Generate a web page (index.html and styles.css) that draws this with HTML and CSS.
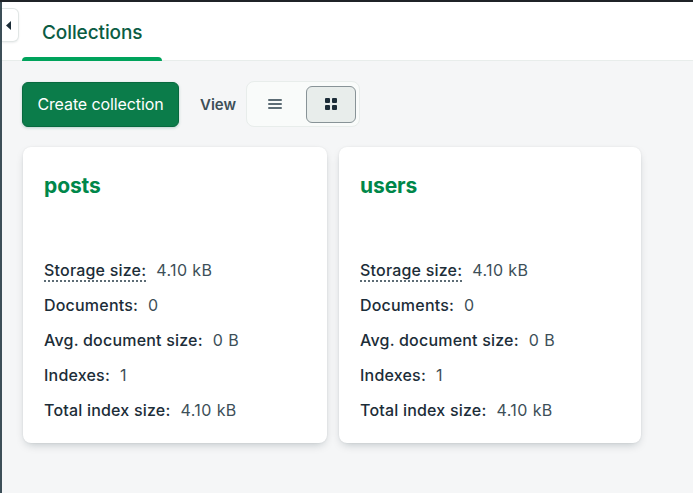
FILE: index.html
```html
<!DOCTYPE html>
<html>
<head>
<meta charset="utf-8">
<link rel="stylesheet" href="styles.css">
</head>
<body>
<div class="topline"></div>
<div class="app">
  <div class="edge"></div>
  <div class="content">
    <button class="collapse" aria-label="Collapse">
      <svg width="6" height="9" viewBox="0 0 6 9"><path d="M5 0 L0 4.5 L5 9 Z" fill="#1c2d38"/></svg>
    </button>
    <header class="header">
      <div class="tab active">Collections</div>
    </header>
    <section class="body">
      <div class="toolbar">
        <button class="btn-primary">Create collection</button>
        <span class="view-label">View</span>
        <div class="segmented">
          <button class="seg">
            <svg width="16" height="14" viewBox="0 0 16 14"><rect x="1" y="2" width="14" height="2" rx="1" fill="#5c6c75"/><rect x="1" y="6" width="14" height="2" rx="1" fill="#5c6c75"/><rect x="1" y="10" width="14" height="2" rx="1" fill="#5c6c75"/></svg>
          </button>
          <button class="seg selected">
            <svg width="14" height="14" viewBox="0 0 14 14"><rect x="1" y="1" width="5" height="5" rx="1" fill="#1c2d38"/><rect x="8" y="1" width="5" height="5" rx="1" fill="#1c2d38"/><rect x="1" y="8" width="5" height="5" rx="1" fill="#1c2d38"/><rect x="8" y="8" width="5" height="5" rx="1" fill="#1c2d38"/></svg>
          </button>
        </div>
      </div>
      <div class="cards">
        <div class="card">
          <h2 class="card-title">posts</h2>
          <dl class="stats">
            <div class="row"><dt><span class="dotted">Storage size:</span></dt><dd>4.10 kB</dd></div>
            <div class="row"><dt>Documents:</dt><dd>0</dd></div>
            <div class="row"><dt>Avg. document size:</dt><dd>0 B</dd></div>
            <div class="row"><dt>Indexes:</dt><dd>1</dd></div>
            <div class="row"><dt>Total index size:</dt><dd>4.10 kB</dd></div>
          </dl>
        </div>
        <div class="card">
          <h2 class="card-title">users</h2>
          <dl class="stats">
            <div class="row"><dt><span class="dotted">Storage size:</span></dt><dd>4.10 kB</dd></div>
            <div class="row"><dt>Documents:</dt><dd>0</dd></div>
            <div class="row"><dt>Avg. document size:</dt><dd>0 B</dd></div>
            <div class="row"><dt>Indexes:</dt><dd>1</dd></div>
            <div class="row"><dt>Total index size:</dt><dd>4.10 kB</dd></div>
          </dl>
        </div>
      </div>
    </section>
  </div>
</div>
</body>
</html>
```
FILE: styles.css
```css
* { box-sizing: border-box; }
html, body { margin: 0; height: 100%; }
body {
  font-family: Inter, "Noto Sans", sans-serif;
  background: #f5f6f7;
  color: #1c2d38;
  overflow: hidden;
}
.topline { height: 2px; background: #1f2327; }
.app { display: flex; height: calc(100% - 2px); }
.edge { width: 2px; background: #3d4f58; flex: none; }
.content { flex: 1; position: relative; background: #f5f6f7; }
.collapse {
  position: absolute; left: 0; top: 6px;
  width: 17px; height: 34px;
  background: #fff; border: 1px solid #e1e6e5; border-left: none;
  border-radius: 0 6px 6px 0;
  display: flex; align-items: center; justify-content: flex-start;
  padding: 0 0 0 4px; margin: 0;
  box-shadow: 0 1px 2px rgba(0,30,43,0.08);
}
.header {
  height: 59px; background: #fff; border-bottom: 1px solid #e8edeb;
  display: flex; align-items: flex-end; padding-left: 20px;
}
.tab {
  position: relative;
  height: 58px; padding: 0 20px;
  display: flex; align-items: center;
  font-size: 19px; font-weight: 500; color: #0b5c43;
  letter-spacing: -0.1px;
  padding-top: 2px;
}
.tab.active::after {
  content: ""; position: absolute; left: 0; right: 0; bottom: -1px;
  height: 4px; background: #00a35c; border-radius: 4px 4px 0 0;
}
.body { padding: 20px 20px; }
.toolbar { display: flex; align-items: center; height: 46px; }
.btn-primary {
  width: 157px; height: 45px;
  background: #0b7c4a; color: #fff;
  border: 1px solid #07693e; border-radius: 6px;
  font-family: inherit; font-size: 16px; font-weight: 400;
  letter-spacing: -0.1px;
  box-shadow: 0 1px 3px rgba(0,104,74,0.25);
  padding: 0;
}
.view-label { margin-left: 21px; font-size: 15px; font-weight: 600; color: #3d4f58; }
.segmented {
  margin-left: 10px;
  width: 114px; height: 46px;
  background: #f9fbfa; border: 1px solid #e8edeb; border-radius: 8px;
  display: flex; align-items: center; gap: 6px; padding: 0 3px 0 3px;
}
.seg {
  width: 51px; height: 37px; border-radius: 6px;
  background: transparent; border: 1px solid transparent;
  display: flex; align-items: center; justify-content: center; padding: 0;
}
.seg.selected { background: #e8edeb; border-color: #889397; }
.cards {
  margin-top: 20px; margin-left: 1px;
  display: grid; grid-template-columns: 304px 302px; gap: 12px;
}
.card {
  background: #fff; border-radius: 8px; height: 296px;
  padding: 27px 21px 20px;
  box-shadow: 0 4px 10px -3px rgba(0,30,43,0.25), 0 0 2px rgba(0,30,43,0.08);
}
.card-title {
  margin: 0; font-size: 21px; line-height: 24px; font-weight: 700;
  color: #00874a; letter-spacing: -0.1px;
}
.stats { margin: 62px 0 0; display: flex; flex-direction: column; gap: 15px; }
.row { display: flex; font-size: 16px; line-height: 20px; }
.row dt { font-weight: 500; color: #1c2d38; letter-spacing: 0.2px; }
.row dd { margin: 0 0 0 10px; color: #3d4f58; letter-spacing: 0.4px; font-weight: 400; }
.dotted { border-bottom: 2px dotted #5c6c75; padding-bottom: 0; }
```
